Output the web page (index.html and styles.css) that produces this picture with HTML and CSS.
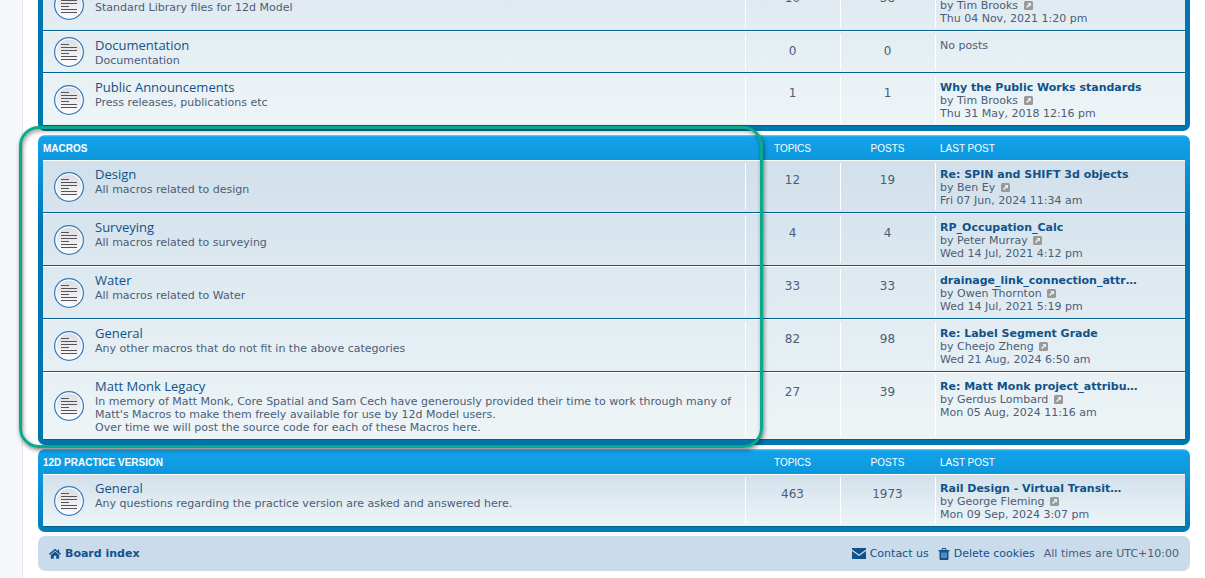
FILE: index.html
```
<!DOCTYPE html>
<html lang="en">
<head>
    <meta charset="UTF-8">
    <meta name="viewport" content="width=device-width, initial-scale=1.0">
    <title>12d Forums - Board index</title>
    <link rel="stylesheet" href="styles.css">
</head>
<body>

    <svg class="sprite" aria-hidden="true">
        <symbol id="forum" viewBox="0 0 30 30">
            <circle cx="15" cy="15" r="14.4" fill="#fff" stroke="#2f78bd" stroke-width="1.2"/>
            <circle cx="15" cy="15" r="12.5" fill="url(#disc)"/>
            <path d="M7 7.5h8M7 10.5h16M7 13.5h16M7 16.5h8M7 19.5h16M7 22.5h16" stroke="#555" stroke-width="1"/>
        </symbol>
        <linearGradient id="disc" x1="0" y1="0" x2="0" y2="1">
            <stop offset="0" stop-color="#dcdce2"/>
            <stop offset="1" stop-color="#fbfbfc"/>
        </linearGradient>
        <symbol id="view" viewBox="0 0 9 9">
            <rect width="9" height="9" rx="1.5" fill="#999"/>
            <path d="M3.5 2h3.500v3.500L5.800 4.400 3.100 7 2 5.900l2.700-2.700z" fill="#e8eef3"/>
        </symbol>
        <symbol id="home" viewBox="0 0 13 12">
            <path d="M6.5 3.2 11 7v4.2H7.8V8H5.2v3.2H2V7z"/>
            <path d="M.5 6.4 6.5 1.3l6 5.1M10.3 1v3.2" fill="none" stroke="#105289" stroke-width="1.5"/>
        </symbol>
        <symbol id="mail" viewBox="0 0 14 11">
            <path d="M0 0h14v1.6L7 6.4 0 1.6zM0 3l7 4.9L14 3v8H0z"/>
        </symbol>
        <symbol id="trash" viewBox="0 0 11 12">
            <path d="M0 2h3l.7-2h3.6L8 2h3v1.2h-1V11q0 1-1 1H2q-1 0-1-1V3.200H0zm4.1 0h2.8L6.600 1H4.400z"/>
            <path d="M3.500 4.500v5.500M5.500 4.500v5.500M7.500 4.500v5.500" stroke="#cadceb" stroke-width=".8"/>
        </symbol>
    </svg>

    <div class="wrap">

        <div class="forabg continued">
            <table>
                <colgroup><col class="col-icon"><col><col class="col-count"><col class="col-count"><col class="col-last"></colgroup>
                <tbody>
                    <tr>
                        <td class="icon"><svg><use href="#forum"/></svg></td>
                        <td class="forum"><a href="#">Libraries</a><p>Standard Library files for 12d Model</p></td>
                        <td class="count">10</td>
                        <td class="count">38</td>
                        <td class="last"><a href="#">Re: Standard Libraries</a><br>by Tim Brooks <svg><use href="#view"/></svg><br>Thu 04 Nov, 2021 1:20 pm</td>
                    </tr>
                    <tr class="short">
                        <td class="icon"><svg><use href="#forum"/></svg></td>
                        <td class="forum"><a href="#">Documentation</a><p>Documentation</p></td>
                        <td class="count">0</td>
                        <td class="count">0</td>
                        <td class="last">No posts</td>
                    </tr>
                    <tr>
                        <td class="icon"><svg><use href="#forum"/></svg></td>
                        <td class="forum"><a href="#">Public Announcements</a><p>Press releases, publications etc</p></td>
                        <td class="count">1</td>
                        <td class="count">1</td>
                        <td class="last"><a href="#">Why the Public Works standards</a><br>by Tim Brooks <svg><use href="#view"/></svg><br>Thu 31 May, 2018 12:16 pm</td>
                    </tr>
                </tbody>
            </table>
        </div>

        <div class="forabg marked">
            <table>
                <colgroup><col class="col-icon"><col><col class="col-count"><col class="col-count"><col class="col-last"></colgroup>
                <thead>
                    <tr>
                        <th class="name" colspan="2">Macros</th>
                        <th class="count">Topics</th>
                        <th class="count">Posts</th>
                        <th class="last">Last post</th>
                    </tr>
                </thead>
                <tbody>
                    <tr>
                        <td class="icon"><svg><use href="#forum"/></svg></td>
                        <td class="forum"><a href="#">Design</a><p>All macros related to design</p></td>
                        <td class="count">12</td>
                        <td class="count">19</td>
                        <td class="last"><a href="#">Re: SPIN and SHIFT 3d objects</a><br>by Ben Ey <svg><use href="#view"/></svg><br>Fri 07 Jun, 2024 11:34 am</td>
                    </tr>
                    <tr>
                        <td class="icon"><svg><use href="#forum"/></svg></td>
                        <td class="forum"><a href="#">Surveying</a><p>All macros related to surveying</p></td>
                        <td class="count">4</td>
                        <td class="count">4</td>
                        <td class="last"><a href="#">RP_Occupation_Calc</a><br>by Peter Murray <svg><use href="#view"/></svg><br>Wed 14 Jul, 2021 4:12 pm</td>
                    </tr>
                    <tr>
                        <td class="icon"><svg><use href="#forum"/></svg></td>
                        <td class="forum"><a href="#">Water</a><p>All macros related to Water</p></td>
                        <td class="count">33</td>
                        <td class="count">33</td>
                        <td class="last"><a href="#">drainage_link_connection_attr…</a><br>by Owen Thornton <svg><use href="#view"/></svg><br>Wed 14 Jul, 2021 5:19 pm</td>
                    </tr>
                    <tr>
                        <td class="icon"><svg><use href="#forum"/></svg></td>
                        <td class="forum"><a href="#">General</a><p>Any other macros that do not fit in the above categories</p></td>
                        <td class="count">82</td>
                        <td class="count">98</td>
                        <td class="last"><a href="#">Re: Label Segment Grade</a><br>by Cheejo Zheng <svg><use href="#view"/></svg><br>Wed 21 Aug, 2024 6:50 am</td>
                    </tr>
                    <tr>
                        <td class="icon"><svg><use href="#forum"/></svg></td>
                        <td class="forum"><a href="#">Matt Monk Legacy</a><p>In memory of Matt Monk, Core Spatial and Sam Cech have generously provided their time to work through many of Matt's Macros to make them freely available for use by 12d Model users.<br>Over time we will post the source code for each of these Macros here.</p></td>
                        <td class="count">27</td>
                        <td class="count">39</td>
                        <td class="last"><a href="#">Re: Matt Monk project_attribu…</a><br>by Gerdus Lombard <svg><use href="#view"/></svg><br>Mon 05 Aug, 2024 11:16 am</td>
                    </tr>
                </tbody>
            </table>
        </div>

        <div class="forabg">
            <table>
                <colgroup><col class="col-icon"><col><col class="col-count"><col class="col-count"><col class="col-last"></colgroup>
                <thead>
                    <tr>
                        <th class="name" colspan="2">12d Practice Version</th>
                        <th class="count">Topics</th>
                        <th class="count">Posts</th>
                        <th class="last">Last post</th>
                    </tr>
                </thead>
                <tbody>
                    <tr>
                        <td class="icon"><svg><use href="#forum"/></svg></td>
                        <td class="forum"><a href="#">General</a><p>Any questions regarding the practice version are asked and answered here.</p></td>
                        <td class="count">463</td>
                        <td class="count">1973</td>
                        <td class="last"><a href="#">Rail Design - Virtual Transit…</a><br>by George Fleming <svg><use href="#view"/></svg><br>Mon 09 Sep, 2024 3:07 pm</td>
                    </tr>
                </tbody>
            </table>
        </div>

        <footer class="navbar">
            <a class="home" href="#"><svg><use href="#home"/></svg>Board index</a>
            <a href="#"><svg class="mail"><use href="#mail"/></svg>Contact us</a>
            <a href="#"><svg><use href="#trash"/></svg>Delete cookies</a>
            <span>All times are UTC+10:00</span>
        </footer>

    </div>

</body>
</html>
```

FILE: styles.css
```
* {
    box-sizing: border-box;
}
body {
    margin: 0;
    background-color: #f5f7fa;
    color: #4c5d77;
    font-family: Verdana, "DejaVu Sans", sans-serif;
    font-size: 11px;
    line-height: 13px;
}
a {
    color: #105289;
    text-decoration: none;
}
a:hover {
    color: #d31141;
    text-decoration: underline;
}
p {
    margin: 0;
}
.sprite {
    position: absolute;
    width: 0;
    height: 0;
}
.wrap {
    display: flow-root;
    margin-left: 22px;
    padding: 0 15px;
    min-height: 100vh;
    background-color: #fff;
    border-left: 1px solid #e6e9ed;
}

/* forum blocks */
.forabg {
    position: relative;
    margin-bottom: 4px;
    padding: 0 5px 5px;
    border-radius: 7px;
    background: #0076b1 linear-gradient(to bottom, #6aceff 0, #12a3eb 2px, #0076b1 92px);
}
.continued {
    margin-top: -22px;
    background: #0076b1;
}
table {
    width: 100%;
    table-layout: fixed;
    border-collapse: separate;
    border-spacing: 0;
}
.col-icon {
    width: 52px;
}
.col-count {
    width: 95px;
}
.col-last {
    width: 250px;
}
tbody {
    background: linear-gradient(to bottom, #d2e0eb, #eef5f7);
}
.continued tbody {
    background: linear-gradient(to bottom, #dde8ef, #eef5f7);
}
th {
    height: 25px;
    padding: 2px 0 0;
    color: #fff;
    font-family: Arial, "Liberation Sans", sans-serif;
    font-size: 10px;
    font-weight: normal;
    text-align: left;
    text-transform: uppercase;
}
th.name {
    font-weight: bold;
}
td {
    height: 53px;
    padding: 7px 5px 4px;
    border-top: 1px solid #fff;
    border-bottom: 1px solid #00608f;
    vertical-align: top;
}
.short td {
    height: 42px;
}
.icon {
    padding: 0 0 0 11px;
    vertical-align: middle;
}
.icon svg {
    display: block;
    width: 30px;
    height: 30px;
}
.forum {
    padding: 5px 5px 5px 0;
}
.forum a {
    display: block;
    margin-bottom: 1px;
    font-family: "Trebuchet MS", "Open Sans", sans-serif;
    font-size: 13px;
    font-weight: 500;
    line-height: 16px;
}
.count {
    text-align: center;
}
td.count {
    padding-top: 13px;
    font-size: 12px;
}
th.last {
    padding-left: 5px;
}
td.count, td.last {
    background: linear-gradient(#fff, #fff) no-repeat 0 2px / 1px calc(100% - 4px);
}
.last a {
    font-weight: bold;
}
.last svg {
    width: 9px;
    height: 9px;
    margin-left: 2px;
    vertical-align: -1px;
}

/* highlighted category */
.marked::after {
    content: "";
    position: absolute;
    z-index: 1;
    top: -9px;
    right: 427px;
    bottom: -3px;
    left: -19px;
    border: 3px solid #09aa8c;
    border-radius: 20px;
    box-shadow: 1px 2px 4px rgba(0, 0, 0, 0.5), inset 1px 2px 4px rgba(0, 0, 0, 0.4);
    pointer-events: none;
}

/* footer */
.navbar {
    display: flex;
    align-items: center;
    gap: 9px;
    height: 35px;
    padding: 0 11px;
    border-radius: 7px;
    background-color: #cadceb;
}
.navbar a {
    display: flex;
    align-items: center;
    gap: 4px;
}
.navbar .home {
    margin-right: auto;
    font-weight: bold;
}
.navbar svg {
    width: 12px;
    height: 12px;
    fill: #105289;
}
.navbar .mail {
    width: 14px;
    height: 11px;
}
```
